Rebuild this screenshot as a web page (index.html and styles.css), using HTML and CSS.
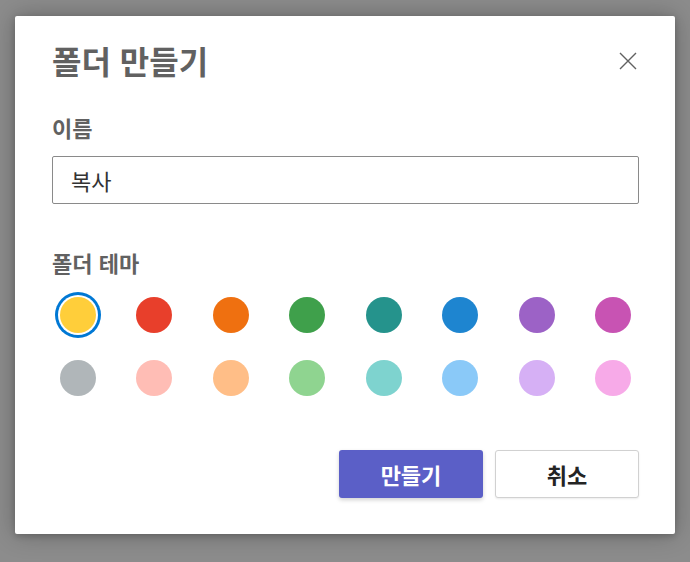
FILE: index.html
```html
<!DOCTYPE html>
<html lang="ko">
<head>
<meta charset="utf-8">
<title>폴더 만들기</title>
<link rel="stylesheet" href="styles.css">
</head>
<body>
<div class="dialog">
  <div class="header">
    <h1 class="title">폴더 만들기</h1>
    <button class="close" aria-label="닫기">
      <svg width="20" height="20" viewBox="0 0 20 20"><path d="M2 2L18 18M18 2L2 18" stroke="#616161" stroke-width="1.4" fill="none"/></svg>
    </button>
  </div>
  <label class="label name-label">이름</label>
  <div class="input">복사</div>
  <div class="label theme-label">폴더 테마</div>
  <div class="swatches">
    <div class="row">
      <span class="cell selected"><span class="dot" style="background:#ffce3a"></span></span>
      <span class="cell"><span class="dot" style="background:#e83f2b"></span></span>
      <span class="cell"><span class="dot" style="background:#ef7010"></span></span>
      <span class="cell"><span class="dot" style="background:#3fa04b"></span></span>
      <span class="cell"><span class="dot" style="background:#25938c"></span></span>
      <span class="cell"><span class="dot" style="background:#1e85d0"></span></span>
      <span class="cell"><span class="dot" style="background:#9c62c6"></span></span>
      <span class="cell"><span class="dot" style="background:#c853b3"></span></span>
    </div>
    <div class="row">
      <span class="cell"><span class="dot" style="background:#b0b6b9"></span></span>
      <span class="cell"><span class="dot" style="background:#ffbdb5"></span></span>
      <span class="cell"><span class="dot" style="background:#ffbe87"></span></span>
      <span class="cell"><span class="dot" style="background:#8fd490"></span></span>
      <span class="cell"><span class="dot" style="background:#7ed3cf"></span></span>
      <span class="cell"><span class="dot" style="background:#8ac9f8"></span></span>
      <span class="cell"><span class="dot" style="background:#d6b0f5"></span></span>
      <span class="cell"><span class="dot" style="background:#f7aae8"></span></span>
    </div>
  </div>
  <div class="actions">
    <button class="btn primary">만들기</button>
    <button class="btn secondary">취소</button>
  </div>
</div>
</body>
</html>
```
FILE: styles.css
```css
* { box-sizing: border-box; }
html, body { margin: 0; padding: 0; }
body {
  width: 690px;
  height: 562px;
  background: #8c8c8c;
  font-family: "Noto Sans CJK KR", "Noto Sans", sans-serif;
  padding: 16px 15px 0 15px;
  overflow: hidden;
}
.dialog {
  width: 660px;
  height: 518px;
  background: #fff;
  border-radius: 2px;
  box-shadow: 0 0 24px rgba(0,0,0,0.28), 0 2px 6px rgba(0,0,0,0.18);
  padding: 24px 36px 36px 37px;
  display: flex;
  flex-direction: column;
}
.header {
  height: 40px;
  display: flex;
  align-items: center;
  justify-content: space-between;
}
.title {
  margin: 0;
  font-size: 32px;
  line-height: 40px;
  font-weight: 700;
  color: #616161;
}
.close {
  border: 0;
  background: none;
  padding: 0;
  width: 20px;
  height: 20px;
  margin-right: 1px;
  margin-top: 2px;
}
.close svg { display: block; }
.label {
  font-size: 22px;
  line-height: 28px;
  font-weight: 700;
  color: #616161;
  display: block;
}
.name-label { margin-top: 33px; }
.input {
  margin-top: 15px;
  height: 48px;
  border: 1px solid #8a8a8a;
  border-radius: 2px;
  padding: 0 18px;
  font-size: 22px;
  line-height: 46px;
  color: #333;
}
.theme-label { margin-top: 44px; }
.swatches {
  margin-top: 13px;
  display: flex;
  flex-direction: column;
  gap: 11px;
}
.row {
  display: flex;
  justify-content: space-between;
}
.cell {
  width: 52px;
  height: 52px;
  display: flex;
  align-items: center;
  justify-content: center;
  border-radius: 50%;
}
.dot {
  width: 36px;
  height: 36px;
  border-radius: 50%;
  display: block;
}
.selected .dot {
  box-shadow: 0 0 0 2px #fff, 0 0 0 5px #0078d4;
}
.actions {
  margin-top: 46px;
  display: flex;
  justify-content: flex-end;
  gap: 12px;
}
.btn {
  width: 144px;
  height: 48px;
  border-radius: 3px;
  font-family: "Noto Sans CJK KR", "Noto Sans", sans-serif;
  font-size: 22px;
  font-weight: 700;
  padding: 0;
}
.primary {
  background: #5b5fc7;
  color: #fff;
  border: 0;
  box-shadow: 0 2px 4px rgba(0,0,0,0.18);
}
.secondary {
  background: #fff;
  color: #242424;
  border: 1px solid #d1d1d1;
  box-shadow: 0 1px 2px rgba(0,0,0,0.08);
}
```
